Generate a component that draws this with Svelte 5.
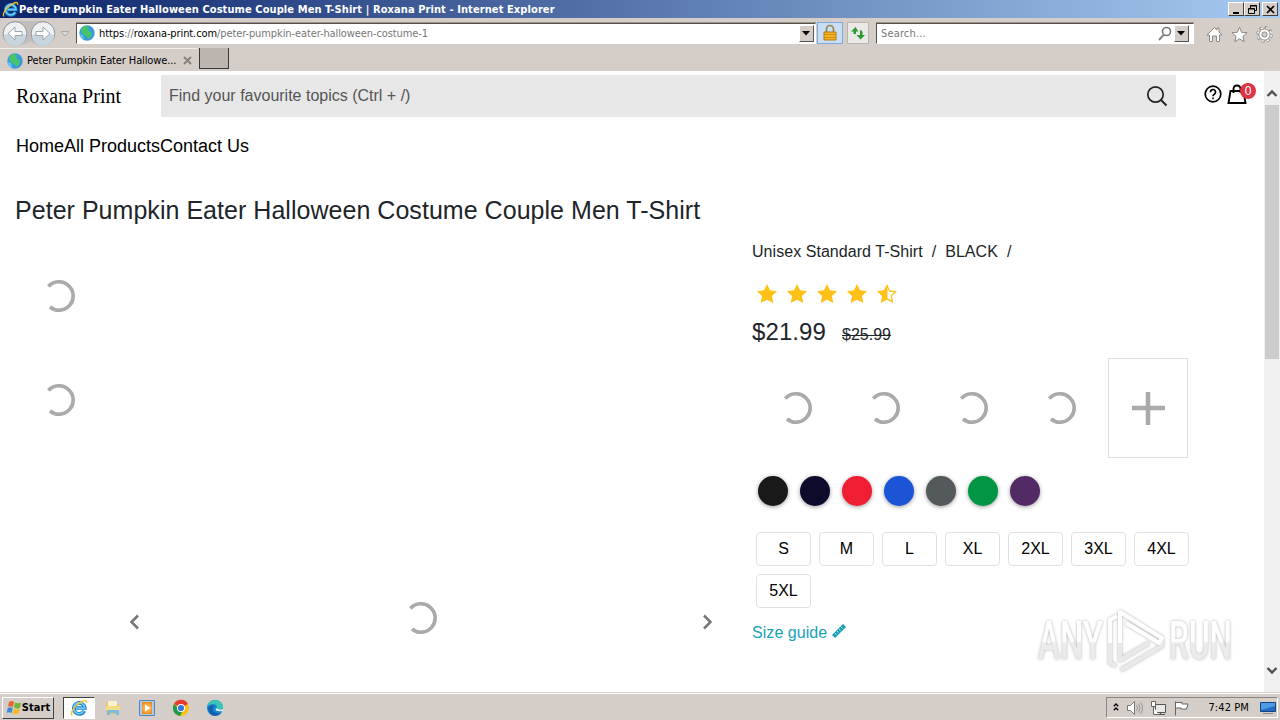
<script lang="ts">
  const colors = ["#191919", "#0d0b2b", "#f01e33", "#1c54d6", "#54595b", "#029644", "#522a66"];
  const sizes = ["S", "M", "L", "XL", "2XL", "3XL", "4XL", "5XL"];
  const star = "M12 1l3.300 7 7.700 1-5.600 5.200 1.500 7.600L12 18.200l-6.900 3.600 1.500-7.600L1 9l7.700-1z";
</script>

{#snippet spinner()}
  <svg class="spinner" width="32" height="32" viewBox="0 0 32 32">
    <path d="M5.4 6.5A14.2 14.2 0 1 1 7 27" fill="none" stroke="#aaa" stroke-width="3.6" />
  </svg>
{/snippet}

{#snippet ie(size: number)}
  <svg width={size} height={size} viewBox="0 0 20 20">
    <path d="M15.8 13.2A6.1 6.1 0 1 1 16.4 10H6" fill="none" stroke="#1679c9" stroke-width="4" />
    <path d="M15.5 13.2A6.1 6.1 0 1 1 16.3 10.2H6.5" fill="none" stroke="#68c8f5" stroke-width="2.2" />
    <path d="M2.2 18.2C-.5 14.5 7 5.500 14 2.500c3-1.300 5-.8 4.300 2" fill="none" stroke="#f4c52d" stroke-width="1.600" />
  </svg>
{/snippet}

{#snippet globe()}
  <svg width="16" height="16" viewBox="0 0 16 16">
    <circle cx="8" cy="8" r="7.700" fill="#3a9bdc" />
    <path d="M3 2.500C6-.2 9 1 10 3l-1 2 3 2 1 3-3 4-3-3-2-1-3-3z" fill="#45c46c" />
    <path d="M1 9l3 1 1 5C2.500 14 1 12 1 9z" fill="#61c8f1" />
  </svg>
{/snippet}

<div class="screen">
  <div class="titlebar">
    {@render ie(17)}
    <span class="title">Peter Pumpkin Eater Halloween Costume Couple Men T-Shirt | Roxana Print - Internet Explorer</span>
    <div class="controls">
      <button aria-label="Minimize"><svg width="13" height="11"><path d="M3 8h6v2H3z" /></svg></button>
      <button aria-label="Restore">
        <svg width="13" height="11"><path d="M4.500 4V1.500h6v5H8M4 2h7M2.500 4.500h6v5h-6zM2 5h7" fill="none" stroke="#000" /></svg>
      </button>
      <button class="close" aria-label="Close"><svg width="13" height="11"><path d="M3 2l7 7M10 2L3 9" stroke="#000" stroke-width="1.700" /></svg></button>
    </div>
  </div>

  <div class="navbar">
    <svg class="history" width="72" height="29" viewBox="0 0 72 29">
      <path d="M15 2h29a13 13 0 0 1 0 25q-8 0-14-5-7 5-15 5A12 12 0 0 1 15 2z" fill="#c1bdba" />
      {#each [15, 43] as x}
        <circle cx={x} cy="14.500" r="11.800" fill="#eef0f1" stroke="#8d979e" />
        <path d="M{x - 11} 16q11-5 22 0a11 11 0 0 1-22 0" fill="#c7d6de" />
      {/each}
      <path d="M22 12.500h-7V8l-7 6.500 7 6.500v-4.500h7zM36 12.500h7V8l7 6.500-7 6.500v-4.500h-7z" fill="#fff" stroke="#9ba7ae" />
      <path d="M61 12.500h8l-4 4.500z" fill="#dedbd6" stroke="#aaa7a1" />
    </svg>
    <div class="field address">
      {@render globe()}
      <span class="url"><b>https</b>://<b>roxana-print.com</b>/peter-pumpkin-eater-halloween-costume-1</span>
      <span class="drop"><svg width="9" height="5"><path d="M0 0h8L4 4.500z" /></svg></span>
    </div>
    <span class="tool lock">
      <svg width="16" height="18" viewBox="0 0 16 18">
        <path d="M4.500 9V5a3.500 3.500 0 0 1 7 0v4" fill="none" stroke="#9b8347" stroke-width="1.700" />
        <path d="M2 8h12v8H2z" fill="#f1b526" stroke="#b17a12" />
        <path d="M2 10.500h12M2 13.500h12" stroke="#d4890f" />
      </svg>
    </span>
    <span class="tool refresh">
      <svg width="16" height="16" viewBox="0 0 16 16">
        <path d="M5.500 2L1 6.500h2.500V9H6V6.500h2.500zM10.500 14.500l4.500-4.500h-2.500V7q0-1.500-2.500-2v5H6.500z" fill="#2c9b35" />
      </svg>
    </span>
    <div class="field find">
      <span class="hint">Search...</span>
      <svg class="glass" width="14" height="15" viewBox="0 0 14 15">
        <circle cx="8.500" cy="5.500" r="4" fill="none" stroke="#777" stroke-width="1.600" />
        <path d="M6 8.500L1 14" stroke="#888" stroke-width="2" />
      </svg>
      <span class="drop"><svg width="9" height="5"><path d="M0 0h8L4 4.500z" /></svg></span>
    </div>
    <div class="browser-icons">
      <svg width="17" height="17" viewBox="0 0 17 17"><path d="M1 9L8.500 1.500 11 4V2h2v4L16 9h-2.500v6.500h-3V10h-4v5.500h-3V9z" /></svg>
      <svg width="17" height="17" viewBox="0 0 17 17"><path d="M8.500 1.200l2.100 5.100 5.500.4-4.200 3.600 1.300 5.400-4.700-2.900-4.700 2.900 1.300-5.400L.9 6.700l5.500-.4z" /></svg>
      <svg width="17" height="17" viewBox="0 0 17 17">
        <circle cx="8.500" cy="8.500" r="6.800" fill="none" stroke-width="2.800" stroke-dasharray="3 2.340" />
        <circle cx="8.500" cy="8.500" r="6.500" fill="none" stroke="#fff" stroke-width="2" stroke-dasharray="2 3.105" stroke-dashoffset="-.5" />
        <circle cx="8.500" cy="8.500" r="5.600" />
        <circle cx="8.500" cy="8.500" r="2.600" fill="#d5cec8" />
      </svg>
    </div>
  </div>

  <div class="tabs">
    <div class="tab">
      {@render globe()}
      <span>Peter Pumpkin Eater Hallowe...</span>
      <svg width="9" height="9" viewBox="0 0 9 9"><path d="M1 1l7 7M8 1L1 8" stroke="#86817c" stroke-width="1.800" /></svg>
    </div>
    <div class="newtab"></div>
  </div>

  <div class="viewport">
    <main>
      <header>
        <a class="brand" href="#top">Roxana Print</a>
        <div class="search">
          <span>Find your favourite topics (Ctrl + /)</span>
          <svg width="22" height="22" viewBox="0 0 22 22">
            <circle cx="9.500" cy="9.500" r="7.700" fill="none" stroke="#222" stroke-width="1.700" />
            <path d="M15 15l5.500 5.500" stroke="#222" stroke-width="2" />
          </svg>
        </div>
        <div class="actions">
          <svg width="18" height="18" viewBox="0 0 18 18">
            <circle cx="9" cy="9" r="7.800" fill="none" stroke="#000" stroke-width="1.700" />
            <path d="M6.500 7.200a2.500 2.500 0 1 1 3.800 2Q9 10 9 11.200M9 12.500v1.700" fill="none" stroke="#000" stroke-width="1.600" />
          </svg>
          <span class="cart">
            <svg width="20" height="21" viewBox="0 0 20 21">
              <path d="M3.500 7h13l2 12h-17zM6.500 9V5q0-3.500 3.500-3.500T13.500 5v4" fill="none" stroke="#000" stroke-width="1.900" />
            </svg>
            <span class="badge">0</span>
          </span>
        </div>
      </header>

      <nav><a href="#home">Home</a><a href="#products">All Products</a><a href="#contact">Contact Us</a></nav>

      <h1>Peter Pumpkin Eater Halloween Costume Couple Men T-Shirt</h1>

      <div class="product">
        <div class="gallery">
          <div class="thumbs">
            {@render spinner()}
            {@render spinner()}
          </div>
          <div class="stage">
            <svg width="11" height="16" viewBox="0 0 11 16"><path d="M9 1.500L2.500 8 9 14.500" fill="none" stroke="#777" stroke-width="2.500" /></svg>
            {@render spinner()}
            <svg width="11" height="16" viewBox="0 0 11 16"><path d="M2 1.500L8.500 8 2 14.500" fill="none" stroke="#777" stroke-width="2.500" /></svg>
          </div>
        </div>

        <div class="details">
          <p class="variant">Unisex Standard T-Shirt&nbsp; /&nbsp; BLACK&nbsp; /</p>
          <div class="stars">
            {#each Array(4) as _}
              <svg width="22" height="22" viewBox="0 0 24 24"><path d={star} fill="#ffc017" /></svg>
            {/each}
            <svg width="22" height="22" viewBox="0 0 24 24">
              <path d={star} fill="#ffc017" />
              <path d="M12.500 5l2 4.500 5.300.7-3.900 3.600 1 5-4.400-2.300z" fill="#fff" />
            </svg>
          </div>
          <div class="price"><span class="now">$21.99</span><s>$25.99</s></div>
          <div class="styles">
            {#each Array(4) as _}
              <div class="style">{@render spinner()}</div>
            {/each}
            <button class="more" aria-label="More styles">
              <svg width="34" height="34" viewBox="0 0 34 34"><path d="M17 1v33M1 17h33" stroke="#aaa" stroke-width="4.600" /></svg>
            </button>
          </div>
          <div class="colors">
            {#each colors as color}
              <span class="swatch" style="background: {color}"></span>
            {/each}
          </div>
          <div class="sizes">
            {#each sizes as size}
              <button>{size}</button>
            {/each}
          </div>
          <a class="guide" href="#sizes">
            Size guide
            <svg width="16" height="16" viewBox="0 0 16 16">
              <path d="M1 12L12 1l3 3L4 15z" fill="#17a2b8" />
              <path d="M4 10l1.500 1.500M6 8l1.500 1.500M8 6l1.500 1.500M10 4l1.500 1.500" stroke="#fff" stroke-width=".7" />
            </svg>
          </a>
        </div>
      </div>
    </main>

    <div class="scrollbar">
      <svg width="16" height="34" viewBox="0 0 16 34"><path d="M3.500 25L8 20.500l4.500 4.500" fill="none" stroke="#505050" stroke-width="2.400" /></svg>
      <div class="thumb"></div>
      <svg class="down" width="16" height="30" viewBox="0 0 16 30"><path d="M3.500 6L8 10.500 12.500 6" fill="none" stroke="#505050" stroke-width="2.400" /></svg>
    </div>

    <svg class="watermark" width="212" height="80" viewBox="0 0 212 80">
      <defs>
        <linearGradient id="fade" gradientUnits="userSpaceOnUse" x1="0" y1="0" x2="0" y2="72">
          <stop offset=".5" stop-color="#fff" />
          <stop offset=".53" stop-color="#ececec" />
          <stop offset="1" stop-color="#e7e7e7" />
        </linearGradient>
      </defs>
      <g fill="url(#fade)">
        <text x="4" y="54" textLength="65" lengthAdjust="spacingAndGlyphs">ANY</text>
        <text x="135" y="54" textLength="63" lengthAdjust="spacingAndGlyphs">RUN</text>
      </g>
      <g fill="none" stroke-linejoin="round" stroke-width="4">
        <path d="M87 65l41-24v-5M76 38v20l6 3M86 38v17l29-17" stroke="#e9e9e9" />
        <path d="M76 38V15l7-4M86 38V7l42 26-3 5-33-20" stroke="#fff" />
      </g>
    </svg>
  </div>

  <footer class="taskbar">
    <button class="start">
      <svg width="16" height="16" viewBox="0 0 16 16">
        <path d="M3 2q3-2 5 0L7 7Q4 5.500 2 7z" fill="#e9642c" />
        <path d="M9 2.500q3 1.500 6 0L14 8q-3 1-6-.5z" fill="#71b53b" />
        <path d="M1.700 8q3-1.500 5 0l-1 5q-3-1.500-5 0z" fill="#368cda" />
        <path d="M7.700 8.500q3 1.500 6 0l-1 5q-3 1.500-6 0z" fill="#f4bc2d" />
      </svg>
      Start
    </button>
    <div class="pinned">
      <span class="active">{@render ie(18)}</span>
      <svg width="18" height="18" viewBox="0 0 18 18">
        <path d="M2 3h5l1 2h7v10H2z" fill="#e8c664" />
        <path d="M4 2h9v5H4z" fill="#f7f1cf" />
        <path d="M2 7h14v4H2z" fill="#f4dc86" />
        <path d="M3 16v-5h12v5h-3v-2H6v2z" fill="#7fbde0" />
      </svg>
      <svg width="18" height="18" viewBox="0 0 18 18">
        <path d="M1.500 1.500h15v15h-15z" fill="#a9cdea" stroke="#5187b8" />
        <path d="M4 3h10v12H4z" fill="#f28a1d" />
        <circle cx="9" cy="9" r="4.800" fill="#f8aa48" />
        <path d="M7 5.500v7L12.500 9z" fill="#fff" />
      </svg>
      <svg width="18" height="18" viewBox="0 0 18 18">
        <circle cx="9" cy="9" r="8" fill="#fbc116" />
        <path d="M9 9L2 5a8 8 0 0 1 14 0z" fill="#e33b2e" />
        <path d="M2 5a8 8 0 0 0 6 12l3-6-4-1z" fill="#229a4b" />
        <circle cx="9" cy="9" r="4" fill="#fff" />
        <circle cx="9" cy="9" r="3.100" fill="#3175df" />
      </svg>
      <svg width="18" height="18" viewBox="0 0 18 18">
        <circle cx="9" cy="9" r="8" fill="#1683d5" />
        <path d="M1.500 7C3 0 15-1 17 7q.5 4-4 4-3 0-2-2 0-4-4-4Q4 5 1.500 7z" fill="#39c4b4" />
        <path d="M2 9q3-4 6-2-3 3 0 6 3 2 7 1-4 4-9 2-3-2-4-7z" fill="#1260a8" />
        <path d="M10 9q-2 4 7 3v-2q-3 2-7-1z" fill="#e4f2f5" />
      </svg>
    </div>
    <div class="tray">
      <svg width="8" height="12" viewBox="0 0 9 12"><path d="M2 4l2.500-2.500L7 4M2 8.500L4.500 6 7 8.500" fill="none" stroke="#000" stroke-width="1.500" /></svg>
      <svg width="18" height="16" viewBox="0 0 18 16">
        <path d="M1.500 5.500h3l4-4v13l-4-4h-3z" fill="#fff" stroke="#777" />
        <path d="M10.500 5q2 3 0 6M12.500 3.500q3 4.500 0 9M14.500 2q4 6 0 12" fill="none" stroke="#999" />
      </svg>
      <svg width="17" height="16" viewBox="0 0 17 16">
        <path d="M5.500 4.500h10v8h-10zM7 14.500h8M10.500 12.500v2" fill="#e9e9e9" stroke="#555" />
        <path d="M1.500 1.500h4v5h-4zM3.500 6.500v8h5" fill="#fff" stroke="#666" />
      </svg>
      <svg width="17" height="16" viewBox="0 0 17 16">
        <path d="M2.500 15.500v-14M3 2.500h6v1.500h6l-1.500 5H8V8H3" fill="#fff" stroke="#666" />
      </svg>
      <time>7:42 PM</time>
      <svg width="16" height="14" viewBox="0 0 16 14">
        <path d="M.5 1.500h15v9H.5z" fill="#236cc4" stroke="#16427f" />
        <path d="M1 2h14v3L1 9z" fill="#4d9be2" />
        <path d="M3 12.500h10" stroke="#888" />
      </svg>
    </div>
  </footer>
</div>

<style>
  :global(body) {
    margin: 0;
    overflow: hidden;
  }

  .screen {
    display: flex;
    flex-direction: column;
    width: 1280px;
    height: 720px;
    background: #d5cec8;
    font-family: "DejaVu Sans Condensed", "DejaVu Sans", sans-serif;
    font-stretch: condensed;
    font-size: 11px;
    color: #000;
  }

  .screen :is(svg, button, span) {
    box-sizing: border-box;
    flex-shrink: 0;
  }

  button {
    padding: 0;
    font: inherit;
    color: inherit;
  }

  a {
    color: inherit;
    text-decoration: none;
  }

  /* Browser window */
  .titlebar {
    display: flex;
    align-items: center;
    height: 18px;
    padding: 0 2px;
    background: linear-gradient(90deg, #0b246a, #a6caf0);
    color: #fff;
  }

  .title {
    font-weight: bold;
    letter-spacing: 0.09px;
    white-space: nowrap;
  }

  .controls {
    display: flex;
    margin-left: auto;
  }

  .controls button {
    width: 16px;
    height: 14px;
    border: 1px solid;
    border-color: #fff #404040 #404040 #fff;
    background: #d5cec8;
    line-height: 0;
  }

  .controls .close {
    margin-left: 2px;
  }

  .navbar {
    display: flex;
    align-items: center;
    height: 30px;
  }

  .history {
    margin-right: 4px;
  }

  .field {
    display: flex;
    align-items: center;
    box-sizing: border-box;
    height: 21px;
    border: 1px solid;
    border-color: #56504d #fff #fff #56504d;
    box-shadow: 0 -1px #9b938e;
    background: #fff;
  }

  .address {
    width: 740px;
    padding: 0 1px 0 2px;
  }

  .url {
    margin-left: 4px;
    letter-spacing: -0.1px;
    color: #777;
  }

  .url b {
    font-weight: normal;
    color: #000;
  }

  .drop {
    display: grid;
    place-items: center;
    width: 15px;
    height: 17px;
    margin-left: auto;
    border: 1px solid;
    border-color: #fff #555 #555 #fff;
    background: #d5cec8;
  }

  .tool {
    display: grid;
    place-items: center;
    height: 22px;
    border: 1px solid #b8b6b2;
    background: #ebe9e6;
  }

  .lock {
    width: 26px;
    margin-left: 1px;
    border-color: #7ea9df;
    background: #c8def6;
  }

  .refresh {
    width: 22px;
    margin: 0 7px 0 4px;
  }

  .find {
    width: 318px;
    padding: 0 4px;
  }

  .hint {
    letter-spacing: 0.15px;
    color: #777;
  }

  .glass {
    margin-left: auto;
  }

  .find .drop {
    margin-left: 2px;
  }

  .browser-icons {
    display: flex;
    gap: 8px;
    margin: 3px 7px 0 auto;
    fill: #fff;
    stroke: #8c8884;
  }

  .tabs {
    display: flex;
    height: 23px;
  }

  .tab {
    display: flex;
    align-items: center;
    gap: 4px;
    box-sizing: border-box;
    width: 198px;
    padding: 1px 6px 0 7px;
    border-top: 1px solid #f0edea;
    letter-spacing: -0.12px;
  }

  .tab svg:last-child {
    margin-left: auto;
  }

  .newtab {
    width: 28px;
    height: 20px;
    margin-left: 1px;
    border: solid #393633;
    border-width: 0 1px 1px 1px;
    background: #bbb4af;
  }

  /* Shop page */
  .viewport {
    position: relative;
    display: flex;
    height: 621px;
    background: #fff;
  }

  main {
    width: 1264px;
    font-family: "Liberation Sans", Arial, sans-serif;
    font-size: 16px;
    color: #212529;
  }

  header {
    display: flex;
    align-items: center;
    height: 42px;
    padding: 4px 8px 0 16px;
  }

  .brand {
    width: 145px;
    font: 20px "Liberation Serif", "Times New Roman", serif;
    color: #000;
  }

  .search {
    display: flex;
    align-items: center;
    justify-content: space-between;
    box-sizing: border-box;
    width: 1015px;
    height: 42px;
    padding: 0 8px;
    background: #e7e7e7;
    color: #555;
  }

  .actions {
    display: flex;
    align-items: center;
    gap: 5px;
    margin: -4px 0 0 28px;
  }

  .cart {
    position: relative;
    height: 21px;
  }

  .badge {
    position: absolute;
    top: -1px;
    left: 13px;
    width: 16px;
    height: 16px;
    border-radius: 50%;
    background: #dc3545;
    color: #fff;
    font-size: 12px;
    line-height: 16px;
    text-align: center;
  }

  nav {
    padding: 18px 16px 0;
    font-size: 18px;
    line-height: 22px;
    color: #000;
  }

  h1 {
    margin: 37px 15px 0;
    font-size: 25px;
    font-weight: normal;
    letter-spacing: 0.035px;
    line-height: 32px;
  }

  .product {
    display: flex;
    padding: 1px 0 0 15px;
  }

  .gallery {
    display: flex;
    width: 737px;
  }

  .thumbs {
    display: flex;
    flex-direction: column;
    gap: 72px;
    padding: 53px 28px 0;
  }

  .stage {
    display: flex;
    flex: 1;
    align-items: center;
    justify-content: space-between;
    height: 32px;
    margin: 379px 39px 0 26px;
  }

  .stage .spinner {
    margin-top: -8px;
  }

  .details {
    width: 445px;
    padding-top: 15px;
  }

  .variant {
    margin: 0;
    letter-spacing: 0.05px;
    line-height: 20px;
  }

  .stars {
    display: flex;
    gap: 8px;
    margin: 21px 0 0 4px;
  }

  .price {
    display: flex;
    align-items: baseline;
    gap: 16px;
    margin-top: 12px;
    line-height: 30px;
  }

  .now {
    font-size: 24px;
    letter-spacing: 0.1px;
  }

  .styles {
    display: flex;
    gap: 8px;
    height: 100px;
    margin: 8px 0 0 4px;
  }

  .style,
  .more {
    display: grid;
    place-items: center;
    width: 80px;
  }

  .more {
    border: 1px solid #ddd;
    background: #fff;
  }

  .colors {
    display: flex;
    gap: 12px;
    margin: 18px 0 0 6px;
  }

  .swatch {
    width: 30px;
    height: 30px;
    border-radius: 50%;
    box-shadow: 0 1px 4px rgb(0 0 0 / 40%);
  }

  .sizes {
    display: flex;
    flex-wrap: wrap;
    gap: 8px;
    margin: 26px 0 0 4px;
  }

  .sizes button {
    width: 55px;
    height: 34px;
    border: 1px solid #dee2e6;
    border-radius: 4px;
    background: #fff;
    color: #000;
  }

  .guide {
    display: flex;
    gap: 4px;
    margin-top: 15px;
    letter-spacing: 0.05px;
    line-height: 20px;
    color: #17a2b8;
  }

  .scrollbar {
    display: flex;
    flex-direction: column;
    width: 16px;
    background: #f0f0f0;
  }

  .thumb {
    height: 254px;
    margin: 0 1px;
    background: #cdcdcd;
  }

  .down {
    margin-top: auto;
  }

  /* Sits over the page corner */
  .watermark {
    position: absolute;
    top: 534px;
    left: 1034px;
    overflow: visible;
    font: 500 53px Roboto, sans-serif;
    filter: drop-shadow(0 0 1.5px rgb(0 0 0 / 30%));
  }

  /* Desktop taskbar */
  .taskbar {
    display: flex;
    align-items: center;
    box-sizing: border-box;
    height: 28px;
    padding: 2px 2px 0;
    border-top: 1px solid #d5cec8;
    box-shadow: inset 0 1px #fff;
  }

  .start {
    display: flex;
    align-items: center;
    justify-content: center;
    width: 52px;
    height: 22px;
    border: 1px solid;
    border-color: #fff #404040 #404040 #fff;
    background: #d5cec8;
    font-weight: bold;
    letter-spacing: 0.1px;
  }

  .pinned {
    display: flex;
    align-items: center;
    gap: 16px;
    margin-left: 9px;
  }

  .active {
    display: grid;
    place-items: center;
    width: 32px;
    height: 22px;
    margin-right: -7px;
    border: 1px solid;
    border-color: #404040 #fff #fff #404040;
    background: #fff;
  }

  .tray {
    display: flex;
    align-items: center;
    gap: 6px;
    box-sizing: border-box;
    width: 172px;
    height: 21px;
    margin-left: auto;
    padding: 0 1px 0 5px;
    border: 1px solid;
    border-color: #8b8681 #fff #fff #8b8681;
  }

  time {
    margin: 0 5px 0 auto;
    letter-spacing: 0.1px;
    white-space: nowrap;
  }
</style>
